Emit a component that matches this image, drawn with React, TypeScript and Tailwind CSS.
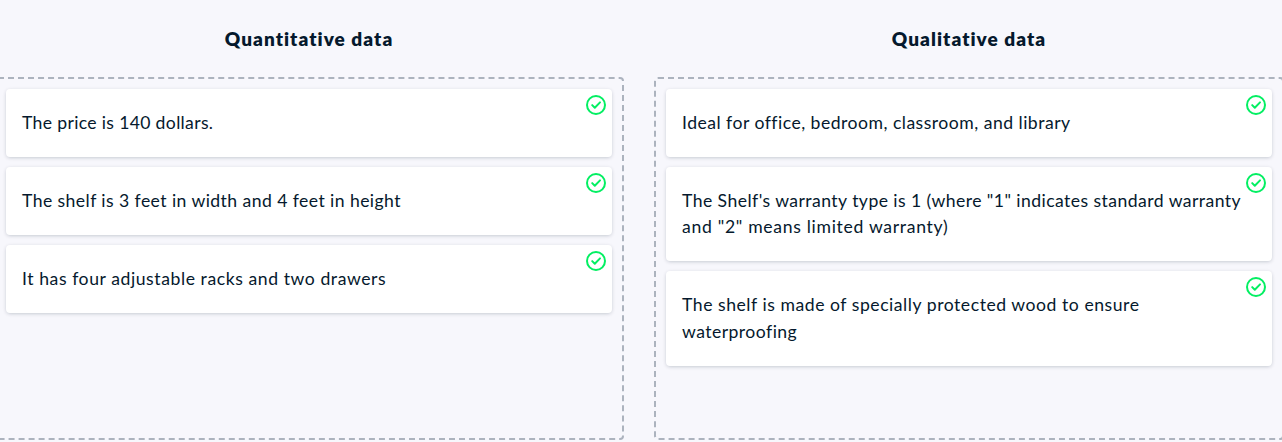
type Line = { text: string; tracking: string };
type Item = { lines: Line[]; height: string };

const quantitative: Item[] = [
  { height: "h-[68px]", lines: [{ text: "The price is 140 dollars.", tracking: "tracking-[0.34px]" }] },
  { height: "h-[68px]", lines: [{ text: "The shelf is 3 feet in width and 4 feet in height", tracking: "tracking-[0.43px]" }] },
  { height: "h-[68px]", lines: [{ text: "It has four adjustable racks and two drawers", tracking: "tracking-[0.57px]" }] },
];

const qualitative: Item[] = [
  { height: "h-[68px]", lines: [{ text: "Ideal for office, bedroom, classroom, and library", tracking: "tracking-[0.48px]" }] },
  {
    height: "h-[94px]",
    lines: [
      { text: "The Shelf's warranty type is 1 (where \"1\" indicates standard warranty", tracking: "tracking-[0.44px]" },
      { text: "and \"2\" means limited warranty)", tracking: "tracking-[0.69px]" },
    ],
  },
  {
    height: "h-[95px]",
    lines: [
      { text: "The shelf is made of specially protected wood to ensure", tracking: "tracking-[0.54px]" },
      { text: "waterproofing", tracking: "tracking-[0.45px]" },
    ],
  },
];

function CheckCircle() {
  return (
    <svg className="absolute top-1.5 right-1.5 size-5" viewBox="0 0 20 20" fill="none" stroke="#03ef62" strokeWidth="2">
      <circle cx="10" cy="10" r="9" />
      <path d="M6.2 10.1 8.8 12.7 14 7.4" strokeLinecap="round" strokeLinejoin="round" />
    </svg>
  );
}

function Card({ item }: { item: Item }) {
  return (
    <li
      className={`relative flex flex-col justify-center rounded-[4px] bg-white pl-4 shadow-[0_1px_4px_-1px_rgba(5,25,45,0.3)] ${item.height}`}
    >
      {item.lines.map((line) => (
        <span key={line.text} className="block h-[26.4px] text-[17.6px] leading-[26.4px] whitespace-nowrap">
          <span className={line.tracking}>{line.text}</span>
        </span>
      ))}
      <CheckCircle />
    </li>
  );
}

function Column({ title, items }: { title: string; items: Item[] }) {
  return (
    <section className="flex w-[630px] shrink-0 flex-col">
      <h2 className="flex h-[77px] items-center justify-center text-[19px] leading-6 font-extrabold">
        <span className="tracking-[1.05px]">{title}</span>
      </h2>
      <ul className="flex h-[363px] flex-col gap-2.5 rounded-[4px] border-2 border-dashed border-[#acb3be] p-2.5">
        {items.map((item) => (
          <Card key={item.lines[0].text} item={item} />
        ))}
      </ul>
    </section>
  );
}

export default function App() {
  return (
    <main className="h-[442px] w-full overflow-hidden bg-[#f7f7fc] font-['Lato',sans-serif] text-[#05192d]">
      <div className="-ml-1.5 flex w-[1290px] gap-[30px]">
        <Column title="Quantitative data" items={quantitative} />
        <Column title="Qualitative data" items={qualitative} />
      </div>
    </main>
  );
}
